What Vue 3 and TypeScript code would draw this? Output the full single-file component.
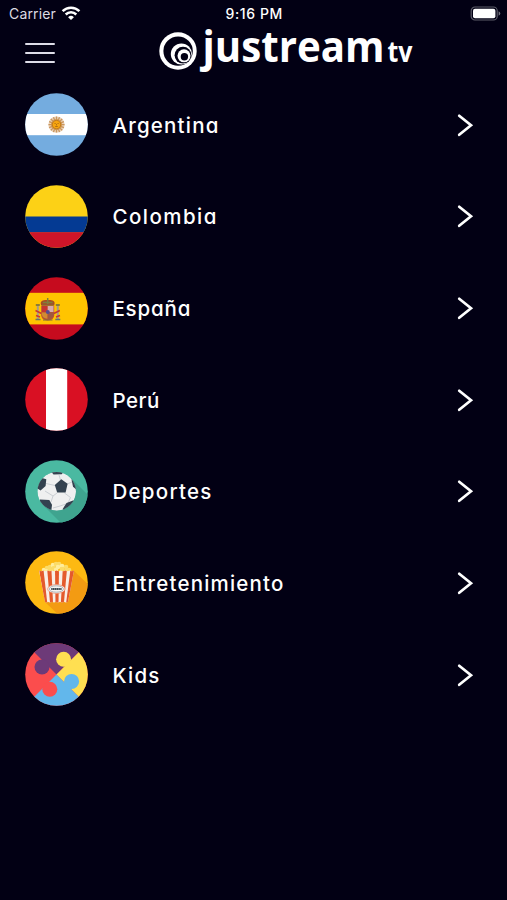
<script setup lang="ts">
interface Channel {
  id: string
  label: string
  width: number
}

const channels: Channel[] = [
  { id: 'argentina', label: 'Argentina', width: 105 },
  { id: 'colombia', label: 'Colombia', width: 103 },
  { id: 'espana', label: 'España', width: 77 },
  { id: 'peru', label: 'Perú', width: 46 },
  { id: 'deportes', label: 'Deportes', width: 98 },
  { id: 'entretenimiento', label: 'Entretenimiento', width: 170 },
  { id: 'kids', label: 'Kids', width: 46 },
]

const rays: number[] = Array.from({ length: 16 }, (_, i) => i * 22.5)
const kernels: number[][] = [
  [19, 19], [22, 17], [25, 16], [28, 14], [31, 13], [34, 13], [37, 15], [41, 16], [44, 19],
  [21, 20], [25, 19], [29, 17], [33, 16], [37, 18], [41, 20], [31, 19], [27, 20], [36, 21],
]
</script>

<template>
  <main class="screen">
    <div class="status">
      <div class="carrier">
        <span>Carrier</span>
        <svg class="wifi" width="20" height="15" viewBox="0 0 20 15">
          <g fill="none" stroke="#fff" stroke-width="2.5">
            <path d="M1.6 5.1a12 12 0 0 1 16.8 0" />
            <path d="M4.7 8.5a7.5 7.5 0 0 1 10.6 0" />
          </g>
          <path d="M10 14.1 7.1 11.2a4.1 4.1 0 0 1 5.8 0z" fill="#fff" />
        </svg>
      </div>
      <span class="time">9:16 PM</span>
      <svg class="battery" width="31" height="15" viewBox="0 0 31 15">
        <rect x="1.2" y="1" width="26" height="13" rx="3.8" fill="none" stroke="#5d5c69" stroke-width="1.2" />
        <rect x="3" y="2.8" width="22.4" height="9.4" rx="2" fill="#fff" />
        <path d="M28.6 5.2q1.7.8 1.7 2.3t-1.7 2.3z" fill="#777682" />
      </svg>
    </div>

    <header class="header">
      <button class="menu" aria-label="Menu">
        <i></i><i></i><i></i>
      </button>
      <svg class="logo" width="260" height="52" viewBox="156 27 260 52">
        <circle cx="178" cy="51" r="18.7" fill="#fff" />
        <circle cx="178.1" cy="51.1" r="14.7" fill="#020014" />
        <circle cx="181.4" cy="54" r="10.6" fill="#fff" />
        <circle cx="183" cy="55.2" r="8.4" fill="#020014" />
        <circle cx="184" cy="55.8" r="6.5" fill="#fff" />
        <circle cx="184.4" cy="56.8" r="3.7" fill="#020014" />
        <text class="word" x="202.6" y="62.3" textLength="182" lengthAdjust="spacingAndGlyphs">justream</text>
        <text class="tv" x="387.5" y="62.3" textLength="25" lengthAdjust="spacingAndGlyphs">tv</text>
      </svg>
    </header>

    <ul class="list">
      <li v-for="c in channels" :key="c.id" class="row">
        <svg class="badge" width="63" height="63" viewBox="0 0 63 63">
          <defs>
            <clipPath :id="'clip-' + c.id"><circle cx="31.5" cy="31.5" r="31.3" /></clipPath>
          </defs>
          <g :clip-path="`url(#clip-${c.id})`">
            <template v-if="c.id === 'argentina'">
              <rect width="63" height="63" fill="#74acdf" />
              <rect y="21" width="63" height="21.2" fill="#fff" />
              <circle cx="31.5" cy="31.6" r="8.2" fill="#ead2b8" />
              <g stroke="#c9955c" stroke-width="1.3">
                <line v-for="r in rays" :key="r" x1="31.5" y1="27" x2="31.5" y2="23.6" :transform="`rotate(${r} 31.5 31.6)`" />
              </g>
              <circle cx="31.5" cy="31.6" r="5.6" fill="#cf9854" />
              <circle cx="31.5" cy="31.6" r="4.2" fill="#f7a50e" stroke="#bd7413" stroke-width=".8" />
              <path d="M29.5 30.5h1.2m1.8 0h1.2M31.5 31v1.4m-1.3 1.1h2.6" stroke="#9a5a12" stroke-width=".7" />
            </template>
            <template v-else-if="c.id === 'colombia'">
              <rect width="63" height="63" fill="#fcd116" />
              <rect y="31.5" width="63" height="16" fill="#043a93" />
              <rect y="47.2" width="63" height="16" fill="#ce1529" />
            </template>
            <template v-else-if="c.id === 'espana'">
              <rect width="63" height="63" fill="#c60b1e" />
              <rect y="15.8" width="63" height="31.6" fill="#ffc400" />
              <path d="M12.8 29v13M32.8 29v13" stroke="#a99a86" stroke-width="2" />
              <path d="M10.8 28h4M30.8 28h4" stroke="#8b7c36" stroke-width="2" />
              <path d="M10.5 42.5h5M30.3 42.5h5" stroke="#65746d" stroke-width="1.7" />
              <path d="m10.5 33.5 6 3m18.3-3-6 3M11 38.5l4 1.5m20-1.5-4 1.5" stroke="#c73535" stroke-width="1.5" />
              <path d="M16.2 28.5h13v9.7q0 4.7-6.5 5.3-6.5-.6-6.5-5.3z" fill="#b95332" />
              <path d="M17 29h5.7v6H17z" fill="#c63531" />
              <path d="M22.7 29h5.8v6h-5.8z" fill="#d9adad" />
              <path d="M17 35.5h5.4v6.3Q17.4 41 17 38z" fill="#d18b32" />
              <path d="M23.2 35.5h5.3V38q-.5 3-5.3 4z" fill="#9f5942" />
              <circle cx="22.8" cy="35" r="2" fill="#564c91" />
              <path d="M16.2 28.2c-2-4.7 3-5.4 6.5-5.1 3.5-.3 8.5.4 6.5 5.1z" fill="#a74d24" />
              <path d="M17.8 25.5h9.8M22.7 21v6" stroke="#7d803d" stroke-width="1.5" />
              <path d="M17 28h11.5M18 43h9.5" stroke="#7c6b40" stroke-width="1.2" />
            </template>
            <template v-else-if="c.id === 'peru'">
              <rect width="63" height="63" fill="#d91023" />
              <rect x="21" width="21.2" height="63" fill="#fff" />
            </template>
            <template v-else-if="c.id === 'deportes'">
              <rect width="63" height="63" fill="#4ab9a1" />
              <path d="m46 18 20 20v28H39L19 46z" fill="#3fa48f" />
              <clipPath id="ball"><circle cx="31.7" cy="31.4" r="19.3" /></clipPath>
              <g clip-path="url(#ball)">
                <circle cx="31.7" cy="31.4" r="19.3" fill="#eff0f0" />
                <g fill="none" stroke="#c5cbd0" stroke-width=".9">
                  <path d="M35.5 20 34 15M41.5 24.3 47 22M39.5 33l6 4.5M32 33l-4 3-8-5M30 25.5l-9-2M28 36l-2 6M45.5 37.5 43 43M35 46l-7 2M35 46l6-2" />
                </g>
                <g fill="#33424f">
                  <path d="m36.3 19.3 6.3 4.5-2 8.8h-8.4l-2.4-7.6z" />
                  <path d="m26.5 12 2 2.4 8.3-.2 2-2.7z" />
                  <path d="m17 18 4.3 1.2-.7 6.7-5 4.5-5-3z" />
                  <path d="m46.5 19.5 1.5 7.2 3.5 3 3-6z" />
                  <path d="m15 39.4 9.3.6 2.7 4.7-.8 6.5L15 48z" />
                  <path d="m38 48.5 3.5-5.5 6.5-2.5 3 1-8 10h-5z" />
                </g>
              </g>
            </template>
            <template v-else-if="c.id === 'entretenimiento'">
              <rect width="63" height="63" fill="#fdb912" />
              <path d="m48 19 20 19v30H38L20 51z" fill="#f39b12" />
              <circle v-for="(k, i) in kernels" :key="i" :cx="k[0]" :cy="k[1]" r="2.3" :fill="i % 3 ? '#fbdc68' : '#ffed9c'" />
              <clipPath id="bucket"><path d="M14 19.6q2.2 1.5 4.3 0 2.2 1.5 4.4 0 2.2 1.5 4.4 0 2.2 1.5 4.4 0 2.2 1.5 4.4 0 2.2 1.5 4.4 0 2.2 1.5 4.4 0 2.2 1.5 4.3 0L43 50.7q-2 1.5-4 0-2 1.5-4 0-2 1.5-4 0-2 1.5-4 0-2 1.5-4 0-1.5 1.5-3 0z" /></clipPath>
              <g clip-path="url(#bucket)">
                <rect x="13" y="18" width="37" height="35" fill="#f8eee5" />
                <g fill="#e45a2c">
                  <path d="M14 18h4.4l4 35h-2.8z" />
                  <path d="M22.2 18h4.2l1.7 35h-3z" />
                  <path d="M30 18h4l-.5 35h-3z" />
                  <path d="M37.8 18H42l-3.2 35h-3z" />
                  <path d="M45.5 18H50l-6 35h-3z" />
                </g>
              </g>
              <ellipse cx="31.3" cy="38" rx="8.7" ry="4.4" fill="#fff" stroke="#e98362" stroke-width=".7" />
              <ellipse cx="31.3" cy="38" rx="7.2" ry="3.2" fill="#f5f4f2" stroke="#66757b" stroke-width=".5" />
              <path d="M26.2 38h10.4" stroke="#3f4c54" stroke-width="2.2" stroke-dasharray="1.5 .3" />
            </template>
            <template v-else>
              <rect width="63" height="63" fill="#fb4d4d" />
              <path d="M0 0 31.5 31.5 63 0z" fill="#6d3a78" />
              <path d="M63 0 31.5 31.5 63 63z" fill="#ffdf51" />
              <path d="M0 63 31.5 31.5 63 63z" fill="#62b7eb" />
              <circle cx="17" cy="24" r="7.5" fill="#6d3a78" />
              <circle cx="38.6" cy="16.2" r="7.5" fill="#ffdf51" />
              <circle cx="46.6" cy="38.4" r="7.5" fill="#62b7eb" />
              <circle cx="24.8" cy="46.2" r="7.5" fill="#fb4d4d" />
            </template>
          </g>
        </svg>
        <svg class="label" width="200" height="32" viewBox="0 0 200 32">
          <text x="-.6" y="24" :textLength="c.width + 1">{{ c.label }}</text>
        </svg>
        <svg class="chevron" width="17" height="24" viewBox="0 0 17 24">
          <path d="M2.2 2.8 14 12.3 2.2 21.8" />
        </svg>
      </li>
    </ul>
  </main>
</template>

<style>
body {
  background: #020014;
}
</style>

<style scoped>
.screen {
  width: 507px;
  height: 900px;
  overflow: hidden;
  background: #020014;
  color: #fff;
  font-family: Inter, "Liberation Sans", sans-serif;
}
.status {
  display: grid;
  grid-template-columns: 1fr auto 1fr;
  align-items: center;
  height: 27px;
  padding: 0 6px 0 9px;
  font-size: 14px;
  line-height: 27px;
}
.carrier {
  display: flex;
  align-items: center;
  gap: 5px;
  color: #dcdbe2;
  letter-spacing: .15px;
}
.time {
  margin-left: -1.5px;
  font-weight: 500;
  letter-spacing: .6px;
}
.battery {
  justify-self: end;
}
.header {
  display: flex;
  height: 52px;
}
.menu {
  display: flex;
  flex-direction: column;
  gap: 7.3px;
  width: 131px;
  padding: 15.5px 0 0;
  margin-left: 25px;
  border: 0;
  background: none;
}
.menu i {
  width: 30px;
  height: 2px;
  border-radius: 1px;
  background: #dedde8;
}
.logo {
  flex: none;
  overflow: visible;
}
.logo text {
  fill: #fff;
  font-family: "Open Sans", "Noto Sans", sans-serif;
  font-weight: 700;
}
.logo .word {
  font-size: 43.5px;
}
.logo .tv {
  font-size: 29px;
}
.list {
  margin: 0;
  padding: 0;
  list-style: none;
}
.row {
  display: flex;
  align-items: center;
  height: 91.63px;
  padding: 0 33.5px 0 25px;
}
.badge {
  flex: none;
}
.label {
  margin-left: 25px;
  overflow: visible;
}
.label text {
  fill: #fff;
  font-size: 20.5px;
  font-weight: 500;
  font-feature-settings: "cv11", "ss03";
}
.chevron {
  margin-left: auto;
}
.chevron path {
  fill: none;
  stroke: #fff;
  stroke-width: 2.7;
  stroke-linecap: round;
  stroke-linejoin: miter;
}
</style>
